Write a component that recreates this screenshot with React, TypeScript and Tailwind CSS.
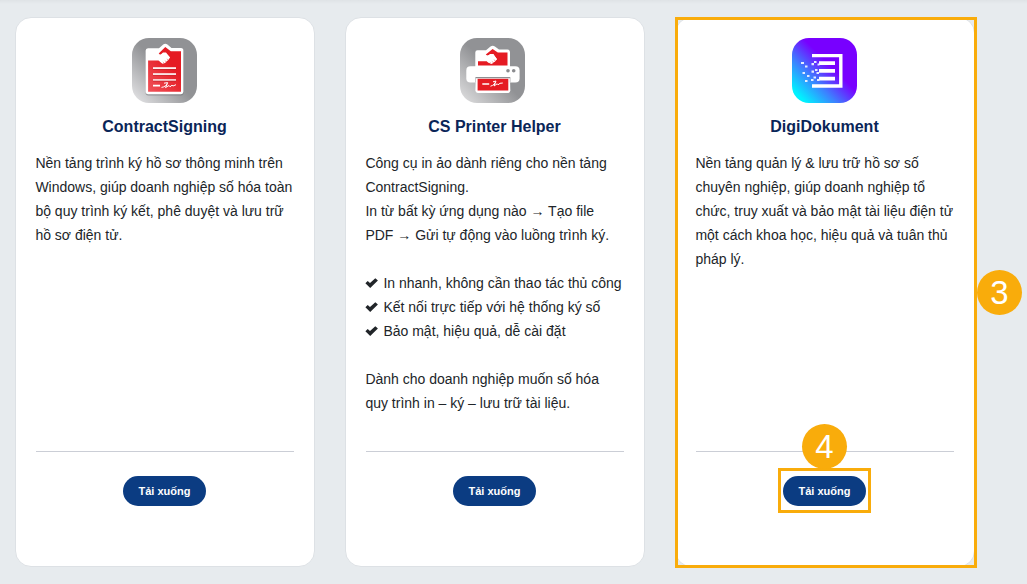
import React from 'react'
import { clsx } from 'clsx'

type Product = {
  title: string
  icon: React.ReactNode
  iconClass: string
  lines: string[]
  highlighted?: boolean
}

const ContractIcon = () => (
  <svg width="65" height="65" viewBox="0 0 65 65">
    <defs>
      <linearGradient id="contract-bg" x1="0" y1="0.95" x2="0.48" y2="0.47">
        <stop offset="0" stopColor="#e4e4e6" />
        <stop offset="1" stopColor="#919295" />
      </linearGradient>
      <linearGradient id="contract-red" x1="0" y1="1" x2="0.6" y2="0.3">
        <stop offset="0" stopColor="#f0525a" />
        <stop offset="1" stopColor="#e51b23" />
      </linearGradient>
    </defs>
    <rect width="65" height="65" rx="17" fill="url(#contract-bg)" />
    <path d="M16 11.3H27L31.2 7.4Q33.3 5.6 35.4 7.4L39.5 11H49Q51.6 11 51.6 13.6V54.8Q51.6 57.4 49 57.4H16.2Q13.6 57.4 13.6 54.8V13.8Q13.6 11.3 16 11.3Z" fill="#6f7074" opacity="0.55" />
    <path d="M16 10.3H27L31.2 6.6Q33.3 4.9 35.4 6.6L39.5 10H49Q51.4 10 51.4 12.6V53.8Q51.4 56.2 49 56.2H16.2Q13.6 56.2 13.6 53.8V12.8Q13.6 10.3 16 10.3Z" fill="#fff" />
    <path d="M16.1 22.6H26.5L30.4 25.8L33.5 24.4L37.8 19.2L34 14.4H31L28.4 17L26.7 15.5L33.3 9L38.8 13.2H49V53.8H16.1Z" fill="url(#contract-red)" />
    <path d="M27 17.3L31.3 15.3L34 15.4L38 19.5L36.5 21.8L32 25.4L28.5 23.6L26 20Z" fill="#fff" />
    <path d="M32.8 22.6L35 24.4M34.8 20.9L36.8 22.4M30.8 23.8L32.4 25.3" stroke="#e9444b" strokeWidth="0.5" />
    <path d="M21 30.2H44M21 36.1H44M21 42H44M21 47.6H28" stroke="#fff" strokeWidth="1.7" />
    <path d="M21 31.4H44M21 37.3H44M21 43.2H44" stroke="#b8242b" strokeWidth="0.6" />
    <path d="M29.5 49.4C33 49.2 35 46.5 35.6 44.6L32 45.2M35.4 45.4L33.5 49.6L37 47.5L38 48.8L40 47.2L41 48L44 46.7" fill="none" stroke="#fff" strokeWidth="1" />
  </svg>
)

const PrinterIcon = () => (
  <svg width="65" height="65" viewBox="0 0 65 65">
    <defs>
      <linearGradient id="printer-bg" x1="0" y1="0.95" x2="0.48" y2="0.47">
        <stop offset="0" stopColor="#dededf" />
        <stop offset="1" stopColor="#919295" />
      </linearGradient>
    </defs>
    <rect width="65" height="65" rx="17" fill="url(#printer-bg)" />
    <path d="M17.5 12.3H26L30.5 8.6Q32.7 7 34.9 8.6L39 11.6H47.5Q50 11.6 50 14V29H15.3V14.6Q15.3 12.3 17.5 12.3Z" fill="#fff" />
    <path d="M18 23.2H27L31.5 26L37 21.5L33.5 16H30L27.8 18L25.8 16.6L32.6 11L37.8 14.4H47.5V27.5H18Z" fill="#e51b23" />
    <path d="M25.5 18L30 16.8L33 16.4L36.8 20.7L35.5 23L31.5 26L28 24.4L25 21Z" fill="#fff" />
    <path d="M31.8 23.4L34 25M33.8 21.7L35.8 23.2M29.8 24.4L31.4 25.6" stroke="#e9444b" strokeWidth="0.5" />
    <path d="M10.5 28.3H55.3Q59.6 28.3 59.6 32.5V40.5Q59.6 44.6 55.3 44.6H10.5Q6.3 44.6 6.3 40.5V32.5Q6.3 28.3 10.5 28.3Z" fill="#fff" />
    <path d="M15.8 39.6H50L50.3 52.5Q50.3 54.9 48 54.9H17.8Q15.4 54.9 15.4 52.5Z" fill="#fff" />
    <path d="M15.5 39.6H50.2" stroke="#8e8f92" strokeWidth="1.4" />
    <path d="M15.5 39.6V44.5M50.2 39.6V44.5" stroke="#b4b5b8" strokeWidth="0.7" />
    <rect x="17.6" y="40.8" width="30.7" height="11.7" fill="#e51b23" />
    <path d="M22.3 46H29.2" stroke="#fff" strokeWidth="1.5" />
    <path d="M30.5 48.2C33.5 47.6 35.4 45 36 43L33 43.8M35.5 44L34 48L37.2 45.8L38 46.8L40 45.3L42.8 45" fill="none" stroke="#fff" strokeWidth="1" />
    <circle cx="48" cy="32.8" r="1.8" fill="#8b8c8f" />
    <circle cx="53.7" cy="32.8" r="1.8" fill="#8b8c8f" />
  </svg>
)

const DokumentIcon = () => (
  <svg width="65" height="65" viewBox="0 0 65 65">
    <defs>
      <linearGradient id="dokument-bg" gradientUnits="userSpaceOnUse" x1="7" y1="58" x2="38" y2="27">
        <stop offset="0" stopColor="#00f2ff" />
        <stop offset="0.5" stopColor="#3d80ff" />
        <stop offset="1" stopColor="#7800ff" />
      </linearGradient>
    </defs>
    <rect width="65" height="65" rx="17" fill="url(#dokument-bg)" />
    <path d="M20 17.6H48.8V48H20" fill="none" stroke="#fff" strokeWidth="3.4" />
    <path d="M27 25.1H43M27 32.8H43M27 40.7H43" stroke="#fff" strokeWidth="3.8" />
    <path
      d="M9 24h3v2h-3zM13 27.5h2.5v2h-2.5zM10.5 34h2.5v2h-2.5zM15 37h2.5v2H15zM13 42h2.5v2H13zM19.5 25h2.5v2.2h-2.5zM22 23h2.5v2H22zM25.5 25.5h2v2h-2zM19.5 32.5h2.5v2.2h-2.5zM23 31h2.5v2H23zM24.5 34h2.5v2h-2.5zM19 41h2.5v2H19zM21.5 38.5H24v2h-2.5zM25 41h2.5v2H25z"
      fill="#e4edff"
    />
  </svg>
)

const CheckMark = () => (
  <svg width="13" height="10" viewBox="0 0 13 10" className="mr-[5px] inline-block align-baseline">
    <path d="M0.4 5.2L2.7 3.1L5 5.1L10.3 0.2L12.9 2.4L5.2 9.9Z" fill="#212529" />
  </svg>
)

const products: Product[] = [
  {
    title: 'ContractSigning',
    icon: <ContractIcon />,
    iconClass: 'ml-[96px]',
    lines: [
      'Nền tảng trình ký hồ sơ thông minh trên',
      'Windows, giúp doanh nghiệp số hóa toàn',
      'bộ quy trình ký kết, phê duyệt và lưu trữ',
      'hồ sơ điện tử.',
    ],
  },
  {
    title: 'CS Printer Helper',
    icon: <PrinterIcon />,
    iconClass: 'ml-[94px]',
    lines: [
      'Công cụ in ảo dành riêng cho nền tảng',
      'ContractSigning.',
      'In từ bất kỳ ứng dụng nào → Tạo file',
      'PDF → Gửi tự động vào luồng trình ký.',
      '',
      '✔In nhanh, không cần thao tác thủ công',
      '✔Kết nối trực tiếp với hệ thống ký số',
      '✔Bảo mật, hiệu quả, dễ cài đặt',
      '',
      'Dành cho doanh nghiệp muốn số hóa',
      'quy trình in – ký – lưu trữ tài liệu.',
    ],
  },
  {
    title: 'DigiDokument',
    icon: <DokumentIcon />,
    iconClass: 'ml-[96px]',
    lines: [
      'Nền tảng quản lý & lưu trữ hồ sơ số',
      'chuyên nghiệp, giúp doanh nghiệp tổ',
      'chức, truy xuất và bảo mật tài liệu điện tử',
      'một cách khoa học, hiệu quả và tuân thủ',
      'pháp lý.',
    ],
    highlighted: true,
  },
]

const StepBadge = ({ step, className }: { step: number; className: string }) => (
  <span className={clsx('absolute flex size-[45px] items-center justify-center rounded-full bg-[#f9ac0b] text-[33px] leading-none text-white', className)}>
    {step}
  </span>
)

const ProductCard = ({ title, icon, iconClass, lines, highlighted }: Product) => {
  return (
    <div className="relative flex h-[550px] w-[300px] flex-col rounded-[16px] border border-[#dde1e5] bg-white px-5 pt-5">
      <div className={clsx('size-[65px]', iconClass)}>{icon}</div>
      <h3 className="mt-3 pr-px text-center text-base leading-6 font-bold text-[#0a2558]">{title}</h3>
      <div className="mt-3 h-[301px] border-b border-[#cbced6] indent-[-0.6px] text-sm leading-6 whitespace-nowrap text-[#212529]">
        {lines.map((line, i) => (
          <div key={i} className="h-6">
            {line.startsWith('✔') ? <><CheckMark />{line.slice(1)}</> : line}
          </div>
        ))}
      </div>
      <div className="relative mt-6 ml-[87px] h-[30px] w-[83px]">
        <button className="h-full w-full rounded-full bg-[#0b3c82] text-[11px] font-bold text-white">Tải xuống</button>
        {highlighted && (
          <>
            <span className="absolute -top-2 -left-[5px] h-[45px] w-[93px] border-3 border-[#f9ac0b]" />
            <StepBadge step={4} className="-top-[52px] left-[19px]" />
          </>
        )}
      </div>
      {highlighted && (
        <>
          <span className="absolute -top-px -left-px h-[551px] w-[302px] border-3 border-[#f9ac0b]" />
          <StepBadge step={3} className="top-[252px] left-[301px]" />
        </>
      )}
    </div>
  )
}

const App = () => {
  return (
    <main className="h-[584px] w-[1027px] overflow-hidden bg-[#e7ebee] font-['Liberation_Sans',Arial,sans-serif]">
      <div className="h-1 bg-linear-to-b from-[#dfe3e6] to-[#e7ebee]" />
      <div className="flex gap-[30px] pt-[13px] pl-[15px]">
        {products.map((product) => (
          <ProductCard key={product.title} {...product} />
        ))}
      </div>
    </main>
  )
}

export default App
